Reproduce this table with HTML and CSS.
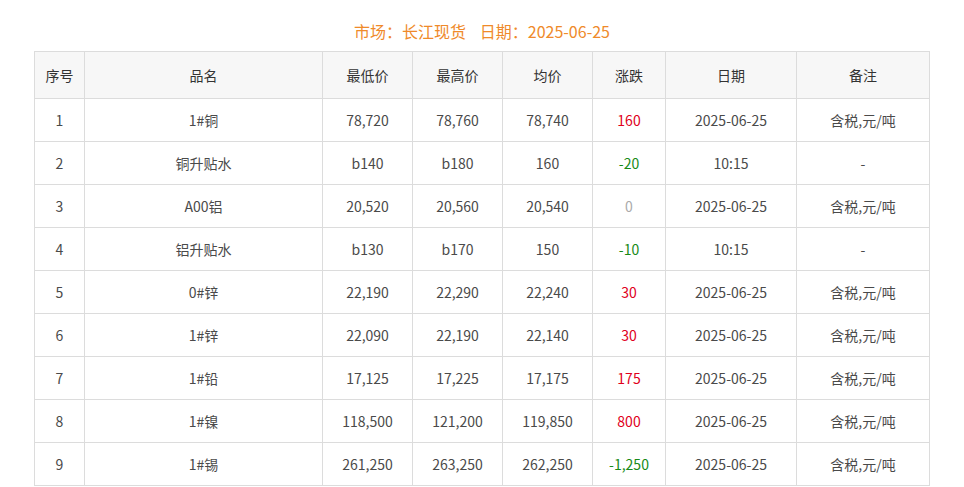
FILE: index.html
```html
<!DOCTYPE html>
<html lang="zh-CN">
<head>
<meta charset="utf-8">
<title>长江现货</title>
<link rel="stylesheet" href="styles.css">
</head>
<body>
<div class="wrap">
  <div class="title">市场：长江现货&nbsp;&nbsp;&nbsp;日期：2025-06-25</div>
  <table class="price">
    <thead>
      <tr>
        <th class="c-no">序号</th>
        <th class="c-name">品名</th>
        <th class="c-p">最低价</th>
        <th class="c-p">最高价</th>
        <th class="c-p">均价</th>
        <th class="c-chg">涨跌</th>
        <th class="c-date">日期</th>
        <th class="c-note">备注</th>
      </tr>
    </thead>
    <tbody>
      <tr><td>1</td><td>1#铜</td><td>78,720</td><td>78,760</td><td>78,740</td><td class="up">160</td><td>2025-06-25</td><td>含税,元/吨</td></tr>
      <tr><td>2</td><td>铜升贴水</td><td>b140</td><td>b180</td><td>160</td><td class="down">-20</td><td>10:15</td><td>-</td></tr>
      <tr><td>3</td><td>A00铝</td><td>20,520</td><td>20,560</td><td>20,540</td><td class="flat">0</td><td>2025-06-25</td><td>含税,元/吨</td></tr>
      <tr><td>4</td><td>铝升贴水</td><td>b130</td><td>b170</td><td>150</td><td class="down">-10</td><td>10:15</td><td>-</td></tr>
      <tr><td>5</td><td>0#锌</td><td>22,190</td><td>22,290</td><td>22,240</td><td class="up">30</td><td>2025-06-25</td><td>含税,元/吨</td></tr>
      <tr><td>6</td><td>1#锌</td><td>22,090</td><td>22,190</td><td>22,140</td><td class="up">30</td><td>2025-06-25</td><td>含税,元/吨</td></tr>
      <tr><td>7</td><td>1#铅</td><td>17,125</td><td>17,225</td><td>17,175</td><td class="up">175</td><td>2025-06-25</td><td>含税,元/吨</td></tr>
      <tr><td>8</td><td>1#镍</td><td>118,500</td><td>121,200</td><td>119,850</td><td class="up">800</td><td>2025-06-25</td><td>含税,元/吨</td></tr>
      <tr><td>9</td><td>1#锡</td><td>261,250</td><td>263,250</td><td>262,250</td><td class="down">-1,250</td><td>2025-06-25</td><td>含税,元/吨</td></tr>
    </tbody>
  </table>
</div>
</body>
</html>
```
FILE: styles.css
```css
html, body {
  margin: 0;
  padding: 0;
  background: #fff;
}
body {
  font-family: "Microsoft YaHei", "Noto Sans CJK SC", "Noto Sans", sans-serif;
  color: #4a4a4a;
  font-size: 14px;
}
.wrap {
  padding: 11px 34px 0 34px;
}
.title {
  text-align: center;
  color: #ef8a2a;
  font-size: 16px;
  line-height: 40px;
  height: 40px;
  word-spacing: 1px;
}
.price {
  width: 896px;
  border-collapse: collapse;
  table-layout: fixed;
}
.price th,
.price td {
  border: 1px solid #dcdcdc;
  text-align: center;
  padding: 0;
  font-weight: normal;
}
.price th {
  background: #f7f7f7;
  color: #333;
  height: 46px;
}
.price td {
  height: 42px;
}
.c-no { width: 49px; }
.c-name { width: 237px; }
.c-p { width: 89px; }
.c-chg { width: 72px; }
.c-date { width: 130px; }
.c-note { width: 132px; }
.up { color: #e0001b; }
.down { color: #178a17; }
.flat { color: #aaa; }
```
